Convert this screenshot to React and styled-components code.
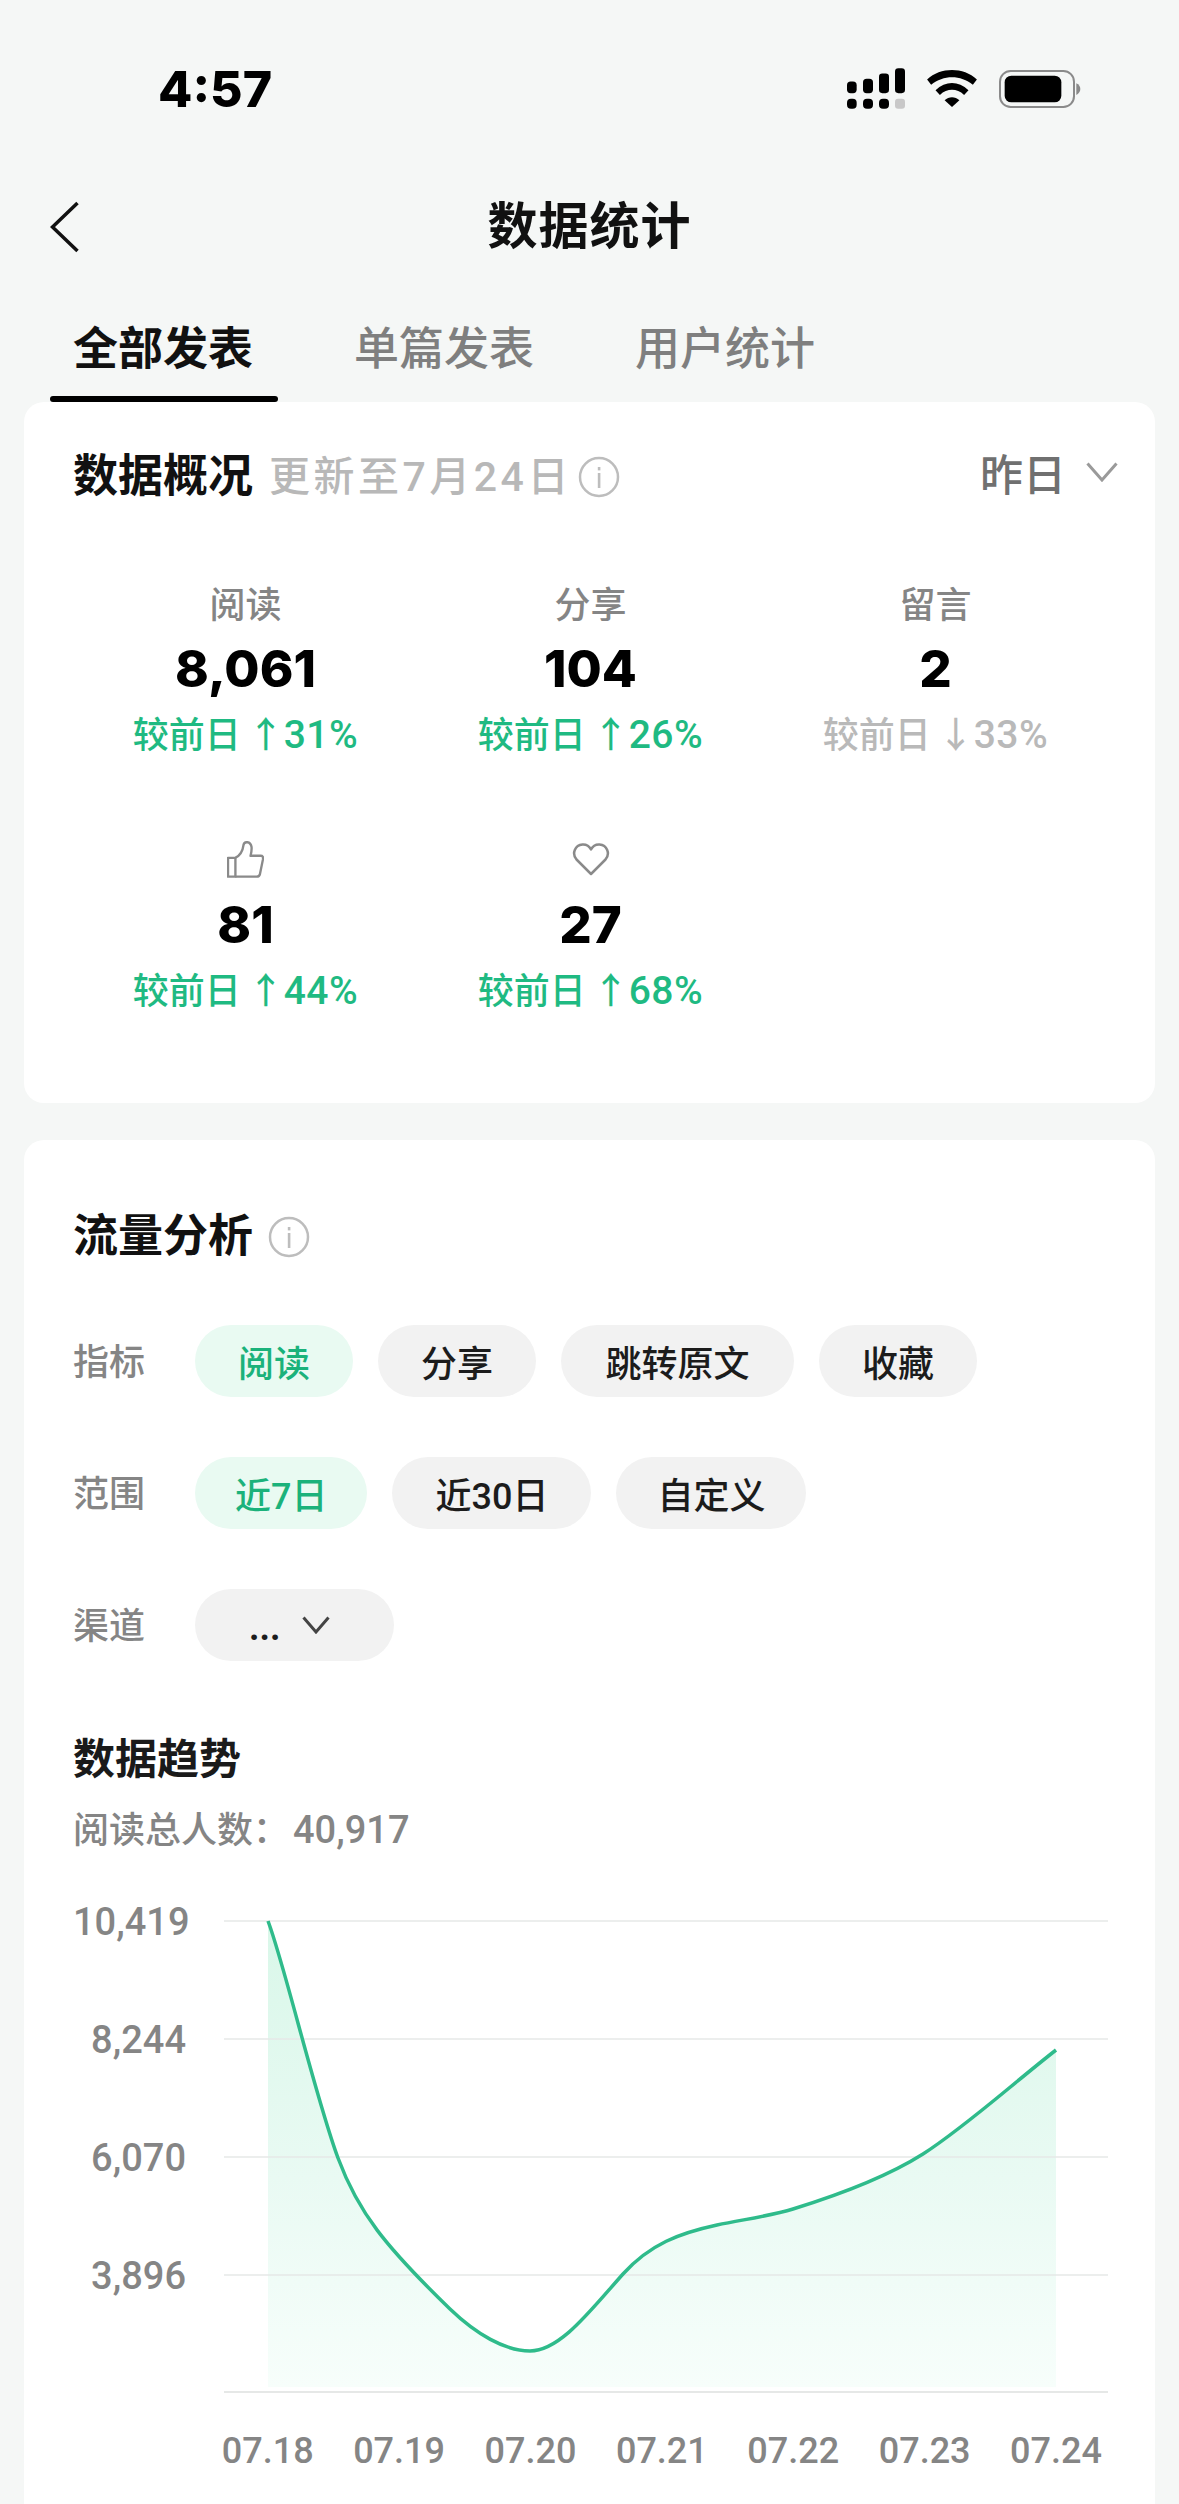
import React from "react";
import styled, { createGlobalStyle } from "styled-components";

const Global = createGlobalStyle`
  html, body { margin: 0; padding: 0; background: #f5f7f6; }
  body { width: 1179px; height: 2504px; overflow: hidden; font-family: Roboto, "Noto Sans CJK SC", sans-serif; color: #111; }
  * { box-sizing: border-box; }
`;

const Page = styled.div`
  width: 1179px;
  height: 2504px;
  overflow: hidden;
  display: flex;
  flex-direction: column;
  & > * { flex: none; }
`;

const StatusBar = styled.div`
  height: 177px;
  display: flex;
  align-items: center;
  justify-content: space-between;
  padding: 0 98px 0 158px;
`;
const Time = styled.div`
  font-family: Inter, sans-serif;
  font-weight: 800;
  font-size: 50px;
  line-height: 50px;
  color: #000;
`;
const StatusIcons = styled.div`
  display: flex;
  align-items: center;
  gap: 22px;
`;

const NavBar = styled.div`
  position: relative;
  height: 100px;
  display: flex;
  align-items: center;
  justify-content: center;
`;
const BackIcon = styled.svg`
  position: absolute;
  left: 50px;
  top: 24px;
`;
const NavTitle = styled.div`
  font-size: 50px;
  font-weight: 700;
  line-height: 60px;
  letter-spacing: 1px;
  color: #111;
`;

const Tabs = styled.div`
  height: 125px;
  padding-left: 50px;
  display: flex;
  gap: 53px;
`;
const Tab = styled.div`
  height: 125px;
  padding: 45px 25px 0 23px;
  font-size: 45px;
  line-height: 56px;
  font-weight: ${(p) => (p.$active ? 700 : 500)};
  color: ${(p) => (p.$active ? "#111" : "#7f7f7f")};
  position: relative;
  &::after {
    content: "";
    display: ${(p) => (p.$active ? "block" : "none")};
    position: absolute;
    left: 0;
    right: 0;
    bottom: 0;
    height: 6px;
    border-radius: 3px;
    background: #000;
  }
`;

const Card = styled.section`
  margin: ${(p) => p.$top || 0}px 24px 0;
  background: #fff;
  border-radius: 20px;
  padding: ${(p) => p.$pad};
  height: ${(p) => p.$height};
`;

const CardHead = styled.div`
  height: 50px;
  display: flex;
  align-items: center;
`;
const CardTitle = styled.h2`
  margin: 0;
  font-size: 45px;
  line-height: 50px;
  font-weight: 700;
  color: #111;
`;
const Updated = styled.span`
  margin-left: 16px;
  font-size: 41px;
  line-height: 50px;
  font-weight: 500;
  letter-spacing: 3.5px;
  color: #b8b8b8;
`;
const InfoIcon = styled.svg`
  margin-left: ${(p) => p.$gap}px;
  flex: none;
`;
const Period = styled.div`
  margin-left: auto;
  margin-top: -10px;
  display: flex;
  align-items: center;
  gap: 20px;
  font-size: 43px;
  font-weight: 500;
  color: #707070;
`;

const StatGrid = styled.div`
  margin-top: 81px;
  display: grid;
  grid-template-columns: repeat(3, 345px);
  row-gap: 83px;
`;
const Stat = styled.div`
  display: flex;
  flex-direction: column;
  align-items: center;
  gap: 13px;
`;
const StatLabel = styled.div`
  height: 40px;
  padding-top: ${(p) => (p.$icon ? 0 : 5)}px;
  display: flex;
  align-items: center;
  font-size: 36px;
  line-height: 40px;
  font-weight: 500;
  color: #858585;
`;
const StatValue = styled.div`
  font-family: Inter, sans-serif;
  font-size: 51px;
  line-height: 66px;
  font-weight: 800;
  color: #000;
`;
const StatDelta = styled.div`
  font-size: 36px;
  line-height: 40px;
  font-weight: 500;
  white-space: pre;
  word-spacing: -2px;
  color: ${(p) => (p.$down ? "#b9b9b9" : "#1fba82")};
`;
const DeltaNum = styled.span`
  font-size: 39px;
  letter-spacing: 0.5px;
`;

const FilterRow = styled.div`
  margin-top: ${(p) => p.$top}px;
  height: 72px;
  display: flex;
  align-items: center;
`;
const FilterLabel = styled.div`
  width: 122px;
  flex: none;
  margin-top: -5px;
  font-size: 36px;
  font-weight: 500;
  color: #858585;
`;
const Pills = styled.div`
  display: flex;
  gap: 25px;
`;
const Pill = styled.div`
  height: 72px;
  padding: 0 ${(p) => p.$pad || 43}px;
  border-radius: 36px;
  display: flex;
  align-items: center;
  font-size: 36px;
  font-weight: 500;
  white-space: pre;
  background: ${(p) => (p.$active ? "#e9faf2" : "#f2f2f2")};
  color: ${(p) => (p.$active ? "#1bb27b" : "#1c1c1c")};
`;
const DropPill = styled(Pill)`
  padding: 0 64px 0 54px;
  gap: 22px;
`;
const Ellipsis = styled.span`
  line-height: 72px;
  font-weight: 700;
  margin-top: 6px;
`;

const TrendTitle = styled.h3`
  margin: 74px 0 0;
  font-size: 42px;
  line-height: 50px;
  font-weight: 700;
  color: #1a1a1a;
`;
const TrendSum = styled.div`
  margin-top: 23px;
  font-size: 36px;
  line-height: 44px;
  font-weight: 500;
  color: #858585;
  span { font-size: 38px; margin-left: 4px; }
`;

const Chart = styled.div`
  display: flex;
  gap: 38px;
`;
const YAxis = styled.div`
  width: 113px;
  padding-top: 10px;
  display: flex;
  flex-direction: column;
  text-align: right;
`;
const YTick = styled.div`
  height: 118px;
  line-height: 118px;
  font-size: 38px;
  font-weight: 500;
  color: #858585;
`;
const Plot = styled.svg`
  display: block;
  flex: none;
`;
const XAxis = styled.div`
  margin: 28px 0 0 129px;
  display: grid;
  grid-template-columns: repeat(7, 131.4px);
`;
const XTick = styled.div`
  text-align: center;
  font-size: 36px;
  line-height: 44px;
  font-weight: 500;
  color: #858585;
`;

const Chevron = ({ w = 32, h = 20, c = "#9a9a9a", sw = 3 }) => (
  <svg width={w} height={h} viewBox={`0 0 ${w} ${h}`} fill="none">
    <path d={`M1.5 1.5L${w / 2} ${h - 2}L${w - 1.5} 1.5`} stroke={c} strokeWidth={sw} />
  </svg>
);

const Info = ({ gap }) => (
  <InfoIcon $gap={gap} width="42" height="42" viewBox="0 0 42 42" fill="none">
    <circle cx="21" cy="21" r="19" stroke="#bdbdbd" strokeWidth="2.5" />
    <rect x="19.8" y="11" width="2.6" height="3.4" fill="#bdbdbd" />
    <rect x="19.8" y="17" width="2.6" height="15" fill="#bdbdbd" />
  </InfoIcon>
);

const Signal = () => (
  <svg width="58" height="41" viewBox="0 0 174 122" fill="#000">
    <rect x="0" y="40" width="29" height="35" rx="11" />
    <rect x="48" y="32" width="30" height="43" rx="11" />
    <rect x="96" y="16" width="30" height="59" rx="10" />
    <rect x="144" y="0" width="30" height="75" rx="10" />
    <rect x="0" y="92" width="29" height="30" rx="12" />
    <rect x="48" y="92" width="30" height="30" rx="12" />
    <rect x="96" y="92" width="30" height="30" rx="12" />
    <rect x="144" y="92" width="30" height="30" rx="9" fill="#c8c8c8" />
  </svg>
);

const Wifi = () => (
  <svg width="50" height="37" viewBox="0 0 148 110" fill="#000">
    <path d="M0 28C40 -9 108 -9 148 28L136 44C100 14 48 14 12 44Z" />
    <path d="M25 60C55 32 93 32 123 60L110 74C88 54 60 54 38 74Z" />
    <path d="M52 90C65 78 83 78 96 90L74 110Z" />
  </svg>
);

const Battery = () => (
  <svg width="82" height="38" viewBox="0 0 246 114" fill="none">
    <rect x="3" y="3" width="222" height="108" rx="32" stroke="#8a8a8a" strokeWidth="6" />
    <rect x="17" y="17" width="170" height="80" rx="20" fill="#000" />
    <path d="M232 40C240 44 244 50 244 57C244 64 240 70 232 75Z" fill="#8a8a8a" />
  </svg>
);

const Thumb = () => (
  <svg width="37" height="37" viewBox="0 0 110 110" fill="none" stroke="#8a8a8a" strokeWidth="7" strokeLinejoin="round">
    <path d="M3 50H25V106H3Z" />
    <path d="M25 50C40 42 47 28 49 12C51 0 70 0 73 18C74 28 72 36 70 44H100C106 44 108 48 107 54L98 98C97 104 93 106 88 106H25" />
  </svg>
);

const Heart = () => (
  <svg width="38" height="34" viewBox="0 0 38 34" fill="none" stroke="#8a8a8a" strokeWidth="2.5" strokeLinejoin="round">
    <path d="M19 32L4.5 17.5C-0.5 11.5 3 3 10.5 2.5C14.5 2.3 17.5 4.5 19 7.5C20.5 4.5 23.5 2.3 27.5 2.5C35 3 38.5 11.5 33.5 17.5Z" />
  </svg>
);

const CURVE =
  "M268 1920C285 1965 315 2095 338 2157C358 2211 385 2245 450 2308C476 2333 505 2350 530 2350" +
  "C560 2350 590 2310 623 2273C650 2243 680 2232 717 2224C743 2218.5 770 2215 793 2208" +
  "C835 2195 885 2177 923 2153C965 2126 1010 2085 1056 2049";
const GRID_Y = [1920, 2038, 2156, 2274, 2391];

const stats = [
  { label: "阅读", value: "8,061", arrow: "↑", num: "31%" },
  { label: "分享", value: "104", arrow: "↑", num: "26%" },
  { label: "留言", value: "2", arrow: "↓", num: "33%", down: true },
  { icon: <Thumb />, value: "81", arrow: "↑", num: "44%" },
  { icon: <Heart />, value: "27", arrow: "↑", num: "68%" },
];

export default function App() {
  return (
    <Page>
      <Global />
      <StatusBar>
        <Time>4:57</Time>
        <StatusIcons>
          <Signal />
          <Wifi />
          <Battery />
        </StatusIcons>
      </StatusBar>
      <NavBar>
        <BackIcon width="30" height="52" viewBox="0 0 30 52" fill="none">
          <path d="M27.5 2L2.5 26L27.5 50" stroke="#111" strokeWidth="3.5" />
        </BackIcon>
        <NavTitle>数据统计</NavTitle>
      </NavBar>
      <Tabs>
        <Tab $active>全部发表</Tab>
        <Tab>单篇发表</Tab>
        <Tab>用户统计</Tab>
      </Tabs>

      <Card $pad="50px 37px 0 49px" $height="701px">
        <CardHead>
          <CardTitle>数据概况</CardTitle>
          <Updated>更新至7月24日</Updated>
          <Info gap={6} />
          <Period>
            昨日
            <Chevron />
          </Period>
        </CardHead>
        <StatGrid>
          {stats.map((s) => (
            <Stat key={s.value}>
              <StatLabel $icon={!!s.icon}>{s.icon || s.label}</StatLabel>
              <StatValue>{s.value}</StatValue>
              <StatDelta $down={s.down}>
                较前日 {s.arrow}
                <DeltaNum>{s.num}</DeltaNum>
              </StatDelta>
            </Stat>
          ))}
        </StatGrid>
      </Card>

      <Card $top={37} $pad="72px 47px 0 49px" $height="1400px">
        <CardHead>
          <CardTitle>流量分析</CardTitle>
          <Info gap={15} />
        </CardHead>
        <FilterRow $top={63}>
          <FilterLabel>指标</FilterLabel>
          <Pills>
            <Pill $active>阅读</Pill>
            <Pill>分享</Pill>
            <Pill $pad={44.5}>跳转原文</Pill>
            <Pill>收藏</Pill>
          </Pills>
        </FilterRow>
        <FilterRow $top={60}>
          <FilterLabel>范围</FilterLabel>
          <Pills>
            <Pill $active $pad={40}>近7日</Pill>
            <Pill $pad={43}>近30日</Pill>
            <Pill $pad={41}>自定义</Pill>
          </Pills>
        </FilterRow>
        <FilterRow $top={60}>
          <FilterLabel>渠道</FilterLabel>
          <Pills>
            <DropPill>
              <Ellipsis>...</Ellipsis>
              <Chevron w={28} h={18} c="#444" sw={3} />
            </DropPill>
          </Pills>
        </FilterRow>
        <TrendTitle>数据趋势</TrendTitle>
        <TrendSum>阅读总人数：<span>40,917</span></TrendSum>
        <Chart>
          <YAxis>
            {["10,419", "8,244", "6,070", "3,896"].map((t) => (
              <YTick key={t}>{t}</YTick>
            ))}
          </YAxis>
          <Plot width="884" height="548" viewBox="224 1852 884 548">
            <defs>
              <linearGradient id="area" gradientUnits="userSpaceOnUse" x1="0" y1="1920" x2="0" y2="2386">
                <stop offset="0" stopColor="#d9f7e9" />
                <stop offset="0.55" stopColor="#e9faf3" />
                <stop offset="1" stopColor="#f7fefb" />
              </linearGradient>
            </defs>
            <path d={`${CURVE}L1056 2386L268 2386Z`} fill="url(#area)" />
            {GRID_Y.map((y, i) => (
              <line key={y} x1="224" x2="1108" y1={y} y2={y} stroke="#e6e8e7" strokeWidth={i === 4 ? 2 : 1.5} />
            ))}
            <path d={CURVE} fill="none" stroke="#2fbb8b" strokeWidth="3.5" />
          </Plot>
        </Chart>
        <XAxis>
          {["07.18", "07.19", "07.20", "07.21", "07.22", "07.23", "07.24"].map((t) => (
            <XTick key={t}>{t}</XTick>
          ))}
        </XAxis>
      </Card>
    </Page>
  );
}
